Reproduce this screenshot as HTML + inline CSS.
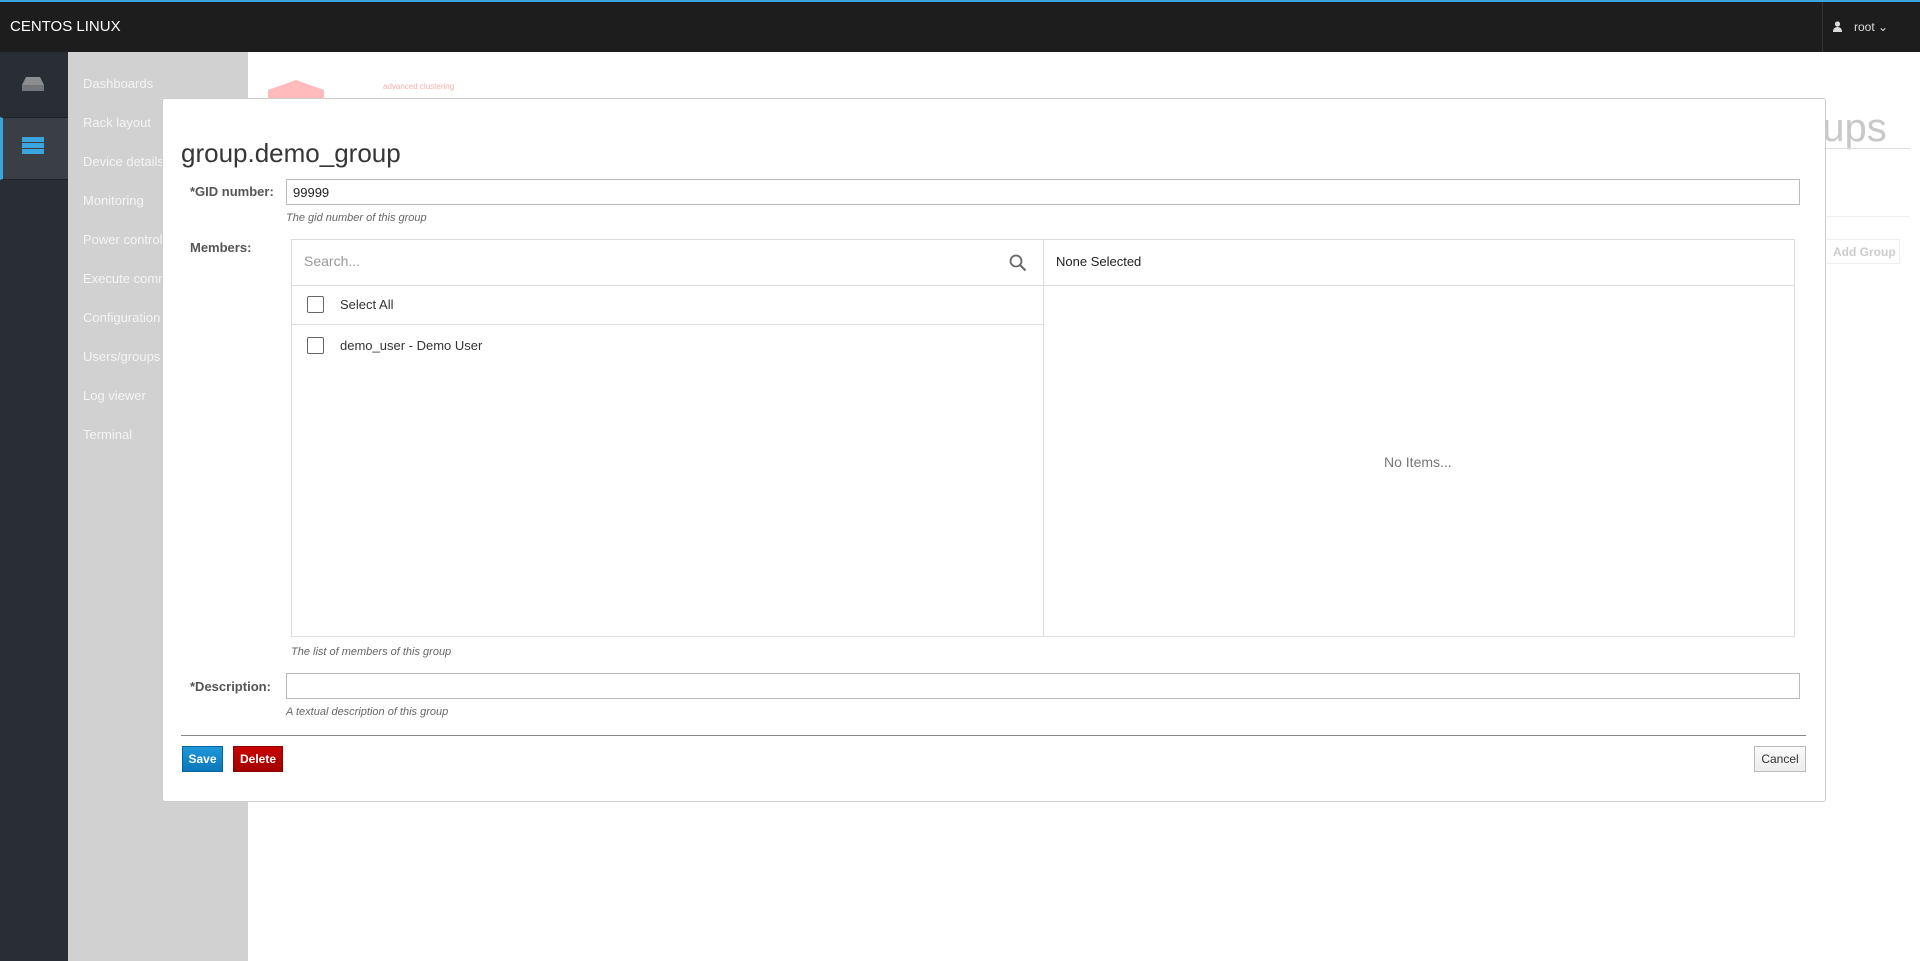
<!DOCTYPE html>
<html><head><meta charset="utf-8"><style>
*{box-sizing:border-box;margin:0;padding:0}
body{width:1920px;height:961px;overflow:hidden;background:#fff;font-family:"Liberation Sans",sans-serif;position:relative;font-size:13px;color:#333}
.a{position:absolute}
.nav{left:83px;color:#f4f4f4;font-size:13px}
.lbl{font-weight:bold;color:#555;font-size:13px}
.help{font-style:italic;color:#666;font-size:11px}
.inp{border:1px solid #bbb;background:#fff}
</style></head><body>
<div class="a" style="left:0;top:0;width:1920px;height:2px;background:#39a5dc"></div>
<div class="a" style="left:0;top:2px;width:1920px;height:50px;background:#1d1d1d"></div>
<div class="a" style="left:10px;top:18px;color:#fff;font-size:15px">CENTOS LINUX</div>
<div class="a" style="left:1822px;top:2px;width:1px;height:50px;background:#333"></div>
<svg class="a" style="left:1833px;top:21px" width="9" height="11" viewBox="0 0 9 11"><circle cx="4.5" cy="3" r="2.6" fill="#ddd"/><path d="M0 11 Q0 6 4.5 6 Q9 6 9 11Z" fill="#ddd"/></svg>
<div class="a" style="left:1854px;top:20px;color:#ddd;font-size:12px">root ⌄</div>

<div class="a" style="left:0;top:52px;width:68px;height:909px;background:#292e34"></div>
<div class="a" style="left:0;top:117px;width:68px;height:63px;background:#393f44;border-left:3px solid #39a5dc;border-top:1px solid #1d2226;border-bottom:1px solid #1d2226"></div>
<svg class="a" style="left:22px;top:77px" width="22" height="14" viewBox="0 0 22 14"><path d="M4 0H18L22 8V14H0V8Z" fill="#8b8d8f"/><rect x="0" y="8" width="22" height="6" fill="#72767b"/></svg>
<svg class="a" style="left:22px;top:137px" width="22" height="17" viewBox="0 0 22 17"><rect y="0" width="22" height="5" fill="#39a5dc"/><rect y="6" width="22" height="5" fill="#39a5dc"/><rect y="12" width="22" height="5" fill="#39a5dc"/></svg>
<div class="a" style="left:68px;top:52px;width:180px;height:909px;background:#d1d1d1"></div>
<div class="a nav" style="top:76px">Dashboards</div>
<div class="a nav" style="top:115px">Rack layout</div>
<div class="a nav" style="top:154px">Device details</div>
<div class="a nav" style="top:193px">Monitoring</div>
<div class="a nav" style="top:232px">Power control</div>
<div class="a nav" style="top:271px">Execute comm</div>
<div class="a nav" style="top:310px">Configuration</div>
<div class="a nav" style="top:349px">Users/groups</div>
<div class="a nav" style="top:388px">Log viewer</div>
<div class="a nav" style="top:427px">Terminal</div>

<div class="a" style="left:268px;top:80px;width:56px;height:20px;background:#fbb;clip-path:polygon(50% 0,100% 50%,100% 100%,0 100%,0 50%)"></div>
<div class="a" style="left:383px;top:82px;color:#f1b0b0;font-size:8px">advanced clustering</div>
<div class="a" style="left:1800px;top:106px;color:#c8c8c8;font-size:40px">oups</div>
<div class="a" style="left:1826px;top:148px;width:84px;height:1px;background:#ddd"></div>
<div class="a" style="left:1826px;top:216px;width:84px;height:1px;background:#eee"></div>
<div class="a" style="left:1820px;top:239px;width:80px;height:25px;border:1px solid #eee;color:#ccc;font-weight:bold;font-size:12px;padding:5px 0 0 12px">Add Group</div>

<div class="a" style="left:162px;top:98px;width:1664px;height:704px;background:#fff;border:1px solid #ccc;border-radius:3px"></div>
<div class="a" style="left:181px;top:138px;font-size:26px;color:#363636">group.demo_group</div>
<div class="a lbl" style="left:190px;top:184px">*GID number:</div>
<div class="a inp" style="left:286px;top:179px;width:1514px;height:26px;padding:5px 6px;font-size:13px;color:#222">99999</div>
<div class="a help" style="left:286px;top:212px">The gid number of this group</div>
<div class="a lbl" style="left:190px;top:240px">Members:</div>
<div class="a" style="left:291px;top:239px;width:1504px;height:398px;border:1px solid #ddd"></div>
<div class="a" style="left:1043px;top:239px;width:1px;height:398px;background:#ddd"></div>
<div class="a" style="left:291px;top:285px;width:1504px;height:1px;background:#ddd"></div>
<div class="a" style="left:291px;top:324px;width:752px;height:1px;background:#ddd"></div>
<div class="a" style="left:304px;top:253px;color:#999;font-size:14px">Search...</div>
<svg class="a" style="left:1009px;top:254px" width="18" height="18" viewBox="0 0 18 18"><circle cx="7" cy="7" r="5.5" fill="none" stroke="#666" stroke-width="1.8"/><path d="M11 11L16.5 16.5" stroke="#666" stroke-width="2"/></svg>
<div class="a" style="left:1056px;top:254px;color:#222;font-size:13px">None Selected</div>
<div class="a" style="left:307px;top:296px;width:17px;height:17px;border:1.5px solid #666;border-radius:2px"></div>
<div class="a" style="left:340px;top:297px;font-size:13px">Select All</div>
<div class="a" style="left:307px;top:337px;width:17px;height:17px;border:1.5px solid #666;border-radius:2px"></div>
<div class="a" style="left:340px;top:338px;font-size:13px">demo_user - Demo User</div>
<div class="a" style="left:1384px;top:454px;color:#777;font-size:14px">No Items...</div>
<div class="a help" style="left:291px;top:646px">The list of members of this group</div>
<div class="a lbl" style="left:190px;top:679px">*Description:</div>
<div class="a inp" style="left:286px;top:673px;width:1514px;height:26px"></div>
<div class="a help" style="left:286px;top:706px">A textual description of this group</div>
<div class="a" style="left:181px;top:735px;width:1625px;height:1px;background:#888"></div>
<div class="a" style="left:182px;top:746px;width:41px;height:26px;background:linear-gradient(#1f97d8,#0b78bc);border:1px solid #00659c;color:#fff;font-weight:bold;font-size:12px;text-align:center;line-height:24px">Save</div>
<div class="a" style="left:233px;top:746px;width:50px;height:26px;background:linear-gradient(#c90000,#a30000);border:1px solid #8b0000;color:#fff;font-weight:bold;font-size:12px;text-align:center;line-height:24px">Delete</div>
<div class="a" style="left:1754px;top:746px;width:52px;height:26px;background:linear-gradient(#fafafa,#ededed);border:1px solid #bbb;color:#333;font-size:12px;text-align:center;line-height:24px">Cancel</div>
</body></html>
